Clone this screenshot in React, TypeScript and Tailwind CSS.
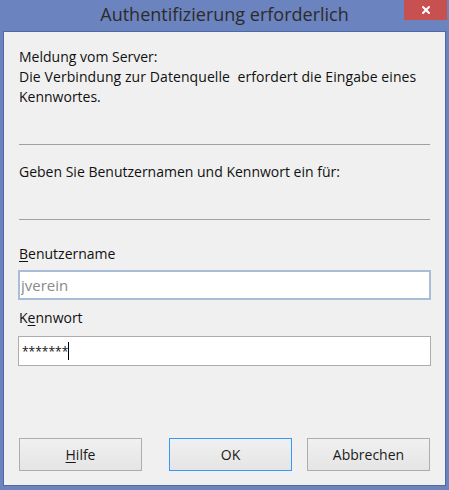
import { X } from 'lucide-react';

const FONT = { fontFamily: "'Open Sans', 'Noto Sans', sans-serif" };

function Btn({ children, focused }: { children: React.ReactNode; focused?: boolean }) {
  return (
    <button
      className={`w-[123px] h-[33px] border text-[14px] text-[#1a1a1a] bg-gradient-to-b from-[#f0f0f0] to-[#e5e5e5] ${
        focused ? 'border-[#3399ff]' : 'border-[#adadad]'
      }`}
    >
      {children}
    </button>
  );
}

export default function App() {
  return (
    <div className="w-[449px] h-[490px] bg-[#6b83be] flex flex-col" style={FONT}>
      <div className="h-[31px] relative flex items-center justify-center shrink-0">
        <span className="text-[18px] text-[#2b2b2b] -mt-[2px]">Authentifizierung erforderlich</span>
        <div className="absolute right-[2px] top-0 w-[43px] h-[20px] bg-[#c75050] flex items-center justify-center">
          <X size={12} strokeWidth={4} color="#ffffff" />
        </div>
      </div>
      <div className="mx-[3px] mb-[4px] flex-1 bg-[#f0f0f0] border border-[#4f68a6] px-[15px] text-[14px] text-[#111] flex flex-col">
        <div className="pt-[15px] leading-[20px] h-[112px]">
          <p>Meldung vom Server:</p>
          <p className="whitespace-pre tracking-[0.08px]">Die Verbindung zur Datenquelle  erfordert die Eingabe eines</p>
          <p>Kennwortes.</p>
        </div>
        <div className="h-px bg-[#a0a0a0]" />
        <div className="h-[74px] flex items-center pb-[21px]">Geben Sie Benutzernamen und Kennwort ein für:</div>
        <div className="h-px bg-[#a0a0a0]" />
        <div className="mt-[24px] leading-[20px]"><span className="underline underline-offset-2">B</span>enutzername</div>
        <input
          readOnly
          value="jverein"
          className="mt-[6px] h-[30px] w-[413px] -ml-px border-2 border-[#a9bdd8] bg-white px-[1px] text-[15px] text-[#8a8a8a] outline-none"
        />
        <div className="mt-[8px] leading-[20px]">K<span className="underline underline-offset-2">e</span>nnwort</div>
        <div className="mt-[8px] h-[30px] w-[413px] -ml-px border border-[#acacac] bg-white flex items-center pl-[3px]">
          <span className="text-[12px] text-[#111] mt-[2px]">*******</span>
          <span className="w-px h-[18px] bg-black" />
        </div>
        <div className="mt-[72px] flex justify-between">
          <div className="flex gap-[27px]">
            <Btn><span className="underline underline-offset-2">H</span>ilfe</Btn>
            <Btn focused>OK</Btn>
          </div>
          <Btn>Abbrechen</Btn>
        </div>
      </div>
    </div>
  );
}
